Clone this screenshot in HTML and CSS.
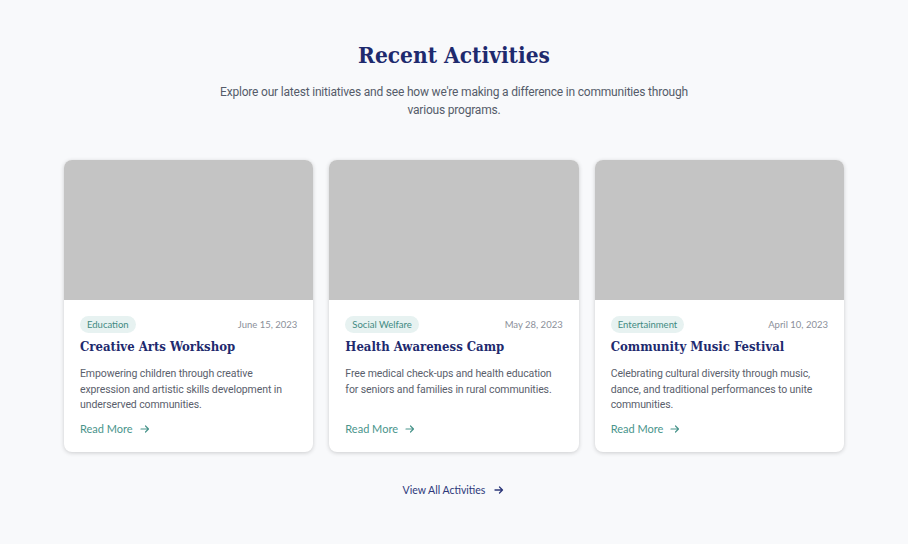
FILE: index.html
```html
<!DOCTYPE html>
<html lang="en">
<head>
<meta charset="utf-8">
<title>Recent Activities</title>
<link rel="stylesheet" href="styles.css">
</head>
<body>
<section class="activities">
  <h2 class="title">Recent Activities</h2>
  <p class="subtitle">Explore our latest initiatives and see how we're making a difference in communities through various programs.</p>
  <div class="grid">
    <article class="card">
      <div class="thumb"></div>
      <div class="body">
        <div class="meta"><span class="badge">Education</span><span class="date">June 15, 2023</span></div>
        <h3 class="card-title">Creative Arts Workshop</h3>
        <p class="desc">Empowering children through creative expression and artistic skills development in underserved communities.</p>
        <a class="more" href="#">Read More <svg class="arrow" viewBox="0 0 24 24"><path d="M4 12h15M13 6l6 6-6 6"/></svg></a>
      </div>
    </article>
    <article class="card">
      <div class="thumb"></div>
      <div class="body">
        <div class="meta"><span class="badge">Social Welfare</span><span class="date">May 28, 2023</span></div>
        <h3 class="card-title">Health Awareness Camp</h3>
        <p class="desc">Free medical check-ups and health education for seniors and families in rural communities.</p>
        <a class="more" href="#">Read More <svg class="arrow" viewBox="0 0 24 24"><path d="M4 12h15M13 6l6 6-6 6"/></svg></a>
      </div>
    </article>
    <article class="card">
      <div class="thumb"></div>
      <div class="body">
        <div class="meta"><span class="badge">Entertainment</span><span class="date">April 10, 2023</span></div>
        <h3 class="card-title">Community Music Festival</h3>
        <p class="desc">Celebrating cultural diversity through music, dance, and traditional performances to unite communities.</p>
        <a class="more" href="#">Read More <svg class="arrow" viewBox="0 0 24 24"><path d="M4 12h15M13 6l6 6-6 6"/></svg></a>
      </div>
    </article>
  </div>
  <div class="all-wrap">
    <a class="all" href="#">View All Activities <svg class="arrow" viewBox="0 0 24 24"><path d="M4 12h15M13 6l6 6-6 6"/></svg></a>
  </div>
</section>
</body>
</html>
```

FILE: styles.css
```css
* { box-sizing: border-box; }
body {
  margin: 0;
  background: #f8f9fb;
  font-family: Roboto, "Noto Sans", sans-serif;
}
.activities {
  padding: 38px 64px 0;
  display: flex;
  flex-direction: column;
  align-items: center;
}
.title {
  margin: 0;
  font-family: "DejaVu Serif Condensed", "DejaVu Serif", serif;
  font-size: 22.5px;
  line-height: 34px;
  font-weight: 700;
  color: #1e2a6e;
}
.subtitle {
  margin: 11px 0 0;
  width: 472px;
  text-align: center;
  font-size: 12px;
  letter-spacing: -0.2px;
  line-height: 18px;
  color: #555c6a;
}
.grid {
  margin-top: 41px;
  width: 780px;
  display: grid;
  grid-template-columns: repeat(3, 1fr);
  gap: 16px;
}
.card {
  background: #fff;
  border-radius: 8px;
  overflow: hidden;
  box-shadow: 0 1px 4px rgba(0,0,0,0.18);
  display: flex;
  flex-direction: column;
}
.thumb {
  height: 140px;
  background: #c4c4c4;
}
.body {
  padding: 16px 16px 15px;
  display: flex;
  flex-direction: column;
  flex: 1;
}
.meta {
  display: flex;
  justify-content: space-between;
  align-items: center;
  font-family: Lato, "Noto Sans", sans-serif;
  font-size: 9.5px;
}
.badge {
  background: #e7f2f1;
  color: #3f8a82;
  border-radius: 9px;
  height: 17px;
  line-height: 17px;
  padding: 0 7px;
}
.date { color: #8b909a; }
.card-title {
  margin: 3px 0 0;
  font-family: "DejaVu Serif Condensed", "DejaVu Serif", serif;
  font-size: 13px;
  line-height: 22px;
  font-weight: 700;
  color: #1e2a6e;
}
.desc {
  margin: 8px 0 0;
  font-size: 10.5px;
  letter-spacing: -0.1px;
  line-height: 15.5px;
  color: #5a606c;
}
.more {
  margin-top: auto;
  padding-top: 8px;
  display: flex;
  align-items: center;
  gap: 6px;
  font-family: Lato, "Noto Sans", sans-serif;
  font-size: 11px;
  line-height: 16px;
  color: #4a958c;
  text-decoration: none;
}
.arrow {
  width: 12px;
  height: 12px;
  fill: none;
  stroke: currentColor;
  stroke-width: 2.4;
  stroke-linecap: round;
  stroke-linejoin: round;
}
.all-wrap {
  margin-top: 30px;
}
.all {
  display: flex;
  align-items: center;
  gap: 8px;
  font-family: Lato, "Noto Sans", sans-serif;
  font-size: 10.5px;
  line-height: 16px;
  color: #2d387a;
  text-decoration: none;
}
.all .arrow { stroke-width: 2.6; }
```
